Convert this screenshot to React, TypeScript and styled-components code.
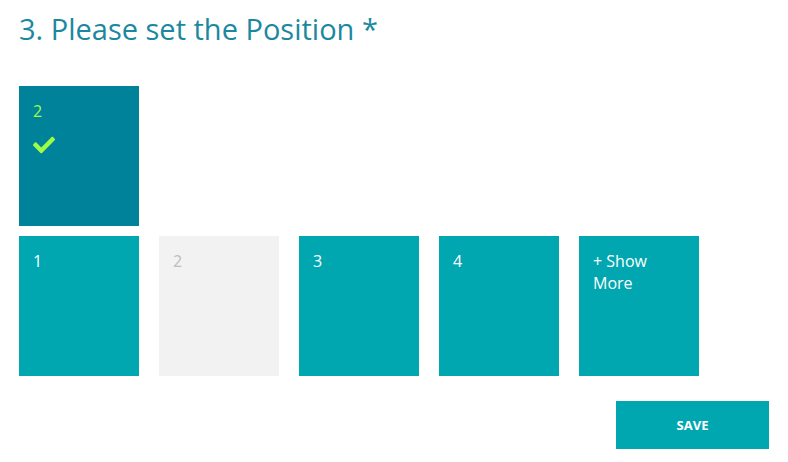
import React from 'react';
import styled, { createGlobalStyle } from 'styled-components';
import { FaCheck } from 'react-icons/fa';

const GlobalStyle = createGlobalStyle`
  body {
    margin: 0;
    background: #fff;
    font-family: "Open Sans", "Liberation Sans", sans-serif;
  }
`;

const Page = styled.div`
  padding: 9px 19px 0 19px;
  width: 788px;
  box-sizing: border-box;
`;

const Title = styled.h2`
  margin: 0 0 37px 0;
  font-size: 29px;
  font-weight: 400;
  line-height: 40px;
  color: #1b88a0;
`;

const Grid = styled.div`
  display: flex;
  flex-direction: column;
  gap: 10px;
`;

const Row = styled.div`
  display: flex;
  gap: 20px;
`;

const Tile = styled.div<{ $variant: 'selected' | 'normal' | 'disabled' }>`
  width: 120px;
  height: 140px;
  box-sizing: border-box;
  padding: 14px 14px;
  font-size: 16px;
  line-height: 22px;
  cursor: pointer;
  background: ${(p) =>
    p.$variant === 'selected' ? '#00829a' : p.$variant === 'disabled' ? '#f2f2f2' : '#00a7b0'};
  color: ${(p) =>
    p.$variant === 'selected' ? '#9cff45' : p.$variant === 'disabled' ? '#bdbdbd' : '#fff'};
`;

const Check = styled.div`
  margin-top: 12px;
  color: #9cff45;
  font-size: 22px;
  line-height: 0;
`;

const Footer = styled.div`
  display: flex;
  justify-content: flex-end;
  margin-top: 25px;
`;

const SaveButton = styled.button`
  width: 153px;
  height: 48px;
  border: none;
  background: #00a7b0;
  color: #fff;
  font-family: "Open Sans", "Liberation Sans", sans-serif;
  font-weight: 700;
  font-size: 13px;
  cursor: pointer;
`;

const positions = ['1', '2', '3', '4'];

export default function App() {
  return (
    <>
      <GlobalStyle />
      <Page>
        <Title>3. Please set the Position *</Title>
        <Grid>
          <Row>
            <Tile $variant="selected">
              2
              <Check>
                <FaCheck />
              </Check>
            </Tile>
          </Row>
          <Row>
            {positions.map((p) => (
              <Tile key={p} $variant={p === '2' ? 'disabled' : 'normal'}>
                {p}
              </Tile>
            ))}
            <Tile $variant="normal">+ Show More</Tile>
          </Row>
        </Grid>
        <Footer>
          <SaveButton>SAVE</SaveButton>
        </Footer>
      </Page>
    </>
  );
}
